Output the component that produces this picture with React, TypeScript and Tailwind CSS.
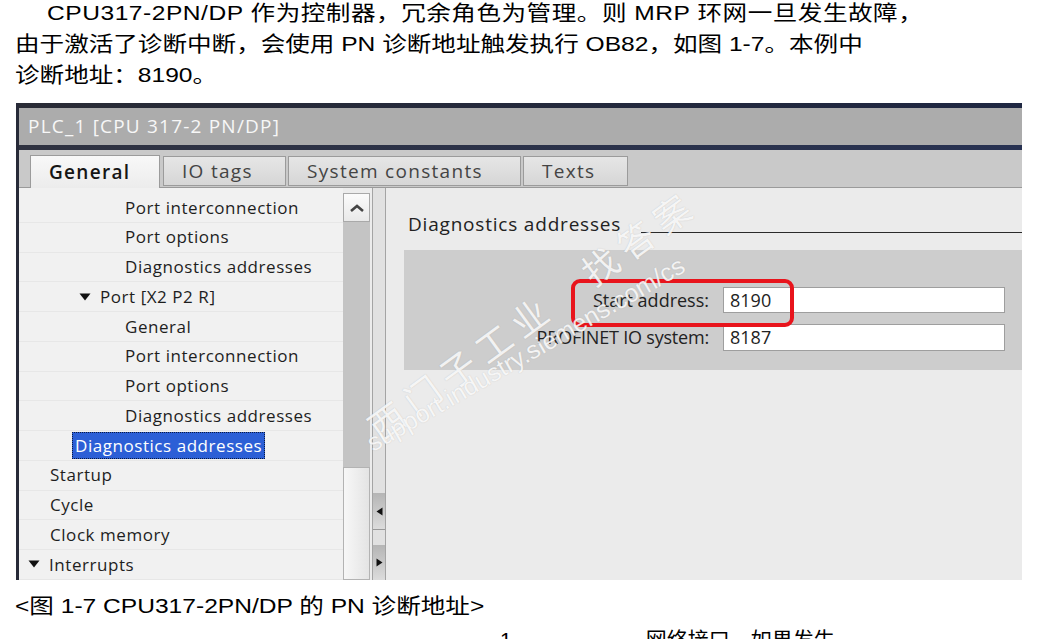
import React from "react";

type Row = { label: string; level: number; selected?: boolean; arrow?: boolean };

const rows: Row[] = [
  { label: "Port interconnection", level: 4 },
  { label: "Port options", level: 4 },
  { label: "Diagnostics addresses", level: 4 },
  { label: "Port [X2 P2 R]", level: 3, arrow: true },
  { label: "General", level: 4 },
  { label: "Port interconnection", level: 4 },
  { label: "Port options", level: 4 },
  { label: "Diagnostics addresses", level: 4 },
  { label: "Diagnostics addresses", level: 2, selected: true },
  { label: "Startup", level: 1 },
  { label: "Cycle", level: 1 },
  { label: "Clock memory", level: 1 },
  { label: "Interrupts", level: 0, arrow: true },
];

function Tri() {
  return (
    <svg width="12" height="8" viewBox="0 0 12 8" className="shrink-0">
      <path d="M0.5 0.5 L11.5 0.5 L6 7.5 Z" fill="#111" />
    </svg>
  );
}

function TreeRow({ r }: { r: Row }) {
  const pad =
    r.level === 4
      ? "pl-[106px]"
      : r.level === 3
      ? "pl-[60px]"
      : r.level === 2
      ? "pl-[53px]"
      : r.level === 1
      ? "pl-[31px]"
      : "pl-[9px]";
  return (
    <div className={`h-[29.75px] flex items-center border-b border-[#e7e7e7] ${pad}`}>
      {r.arrow && (
        <span className="mr-[9px] flex items-center">
          <Tri />
        </span>
      )}
      {r.selected ? (
        <span className="h-[27px] flex items-center px-[3px] bg-[#2c5fd6] text-white outline-1 outline-dotted outline-[#0b1a40] -outline-offset-1">
          {r.label}
        </span>
      ) : (
        <span className="text-[#1e1e1e]">{r.label}</span>
      )}
    </div>
  );
}

export default function App() {
  const doc = "font-['Liberation_Sans','Noto_Sans_CJK_SC',sans-serif]";
  const ui = "font-['Open_Sans','Noto_Sans',sans-serif]";
  const line = "inline-block origin-left scale-x-[1.17] whitespace-nowrap";
  return (
    <div className={`relative w-[1052px] h-[639px] overflow-hidden bg-white text-black ${doc}`}>
      {/* paragraph */}
      <div className="-mt-[3px] pl-[15px] text-[21px] leading-[31px]">
        <div className="h-[31px] pl-[32px]">
          <span className={`${line} tracking-[0.45px]`}>
            CPU317-2PN/DP 作为控制器，冗余角色为管理。则 MRP 环网一旦发生故障，
          </span>
        </div>
        <div className="h-[31px]">
          <span className={line}>
            由于激活了诊断中断，会使用 PN 诊断地址触发执行 OB82，如图 1-7。本例中
          </span>
        </div>
        <div className="h-[31px]">
          <span className={line}>诊断地址：8190。</span>
        </div>
      </div>

      {/* screenshot */}
      <div className={`relative mt-[13px] ml-[16px] w-[1006px] h-[477px] flex flex-col border-l-[3px] border-[#272a38] ${ui}`}>
        <div className="h-[5px] bg-gradient-to-r from-[#2a2c36] to-[#1f2742]" />
        <div className="h-[37px] bg-[#acacac] flex items-center pl-[9px] text-[19px] tracking-[1.2px] text-[#f7f7f7] whitespace-nowrap">
          PLC_1 [CPU 317-2 PN/DP]
        </div>
        <div className="h-[5px] bg-gradient-to-r from-[#2f3240] to-[#283252]" />
        {/* tabs */}
        <div className="h-[38px] bg-[#c9c9c9] border-b border-[#9a9a9a] flex items-end pl-[11px] text-[19px] tracking-[1.3px]">
          <div className="w-[130px] h-[33px] -mb-px flex items-center pl-[18px] bg-gradient-to-b from-[#f8f8f8] to-[#ececec] border border-b-0 border-[#9b9b9b] font-semibold text-[#151515]">
            General
          </div>
          <div className="ml-[3px] w-[123px] h-[30px] mb-px flex items-center pl-[18px] bg-gradient-to-b from-[#e6e6e6] to-[#d6d6d6] border border-[#9b9b9b] text-[#444]">
            IO tags
          </div>
          <div className="ml-[2px] w-[233px] h-[30px] mb-px flex items-center pl-[18px] bg-gradient-to-b from-[#e6e6e6] to-[#d6d6d6] border border-[#9b9b9b] text-[#444] whitespace-nowrap">
            System constants
          </div>
          <div className="ml-[2px] w-[105px] h-[30px] mb-px flex items-center pl-[18px] bg-gradient-to-b from-[#e6e6e6] to-[#d6d6d6] border border-[#9b9b9b] text-[#444]">
            Texts
          </div>
        </div>

        {/* content */}
        <div className="flex-1 flex min-h-0">
          {/* tree */}
          <div className="w-[324px] bg-[#f1f1f1] pt-[5px] text-[17px] tracking-[0.55px] whitespace-nowrap overflow-hidden">
            {rows.map((r, i) => (
              <TreeRow key={i} r={r} />
            ))}
          </div>
          {/* scrollbar */}
          <div className="w-[29px] flex flex-col pt-[5px] pr-[2px] bg-[#ececec]">
            <div className="h-[29px] flex items-center justify-center bg-gradient-to-b from-[#fbfbfb] to-[#e9e9e9] border border-[#a9a9a9]">
              <svg width="16" height="10" viewBox="0 0 16 10">
                <polyline points="2,8 8,3 14,8" fill="none" stroke="#454545" strokeWidth="2.6" />
              </svg>
            </div>
            <div className="h-[245px] bg-[#c4c4c4]" />
            <div className="flex-1 bg-gradient-to-r from-[#f7f7f7] to-[#e4e4e4] border border-[#b3b3b3]" />
          </div>
          {/* splitter */}
          <div className="w-[14px] flex flex-col bg-[#e1e1e1] border-l border-r border-[#a4a4a4]">
            <div className="mt-[305px] h-[37px] bg-gradient-to-b from-[#b5b5b5] to-[#dcdcdc] flex items-center justify-center border-b border-[#999]">
              <svg width="7" height="9" viewBox="0 0 7 9">
                <path d="M6.5 0.5 L0.5 4.5 L6.5 8.5 Z" fill="#111" />
              </svg>
            </div>
            <div className="mt-[15px] flex-1 bg-gradient-to-b from-[#b5b5b5] to-[#dcdcdc] flex items-center justify-center">
              <svg width="7" height="9" viewBox="0 0 7 9">
                <path d="M0.5 0.5 L6.5 4.5 L0.5 8.5 Z" fill="#111" />
              </svg>
            </div>
          </div>
          {/* right panel */}
          <div className="flex-1 bg-[#ebebeb] flex flex-col">
            <div className="pt-[23px] pl-[22px] flex items-end">
              <div className="h-[26px] flex items-center text-[19px] tracking-[0.8px] text-[#222] whitespace-nowrap">
                Diagnostics addresses
              </div>
              <div className="ml-[20px] mb-[4px] flex-1 h-px bg-[#2a2a2a]" />
            </div>
            <div className="relative mt-[13px] ml-[18px] h-[120px] bg-[#cdcdcd] pt-[37px] pr-[17px] grid grid-cols-[1fr_282px] gap-x-[14px] gap-y-[11px] content-start text-[18px] text-[#222]">
              <div className="h-[26px] flex items-center justify-end whitespace-nowrap">Start address:</div>
              <div className="h-[26px] flex items-center pl-[6px] bg-white border border-[#9e9e9e]">8190</div>
              <div className="h-[27px] flex items-center justify-end whitespace-nowrap tracking-[-0.2px]">PROFINET IO system:</div>
              <div className="h-[27px] flex items-center pl-[6px] bg-white border border-[#9e9e9e]">8187</div>
              <div className="absolute left-[167px] top-[29px] w-[223px] h-[48px] border-[4px] border-[#e8141c] rounded-[9px]" />
            </div>
          </div>
        </div>

        {/* watermark overlay */}
        <div className="pointer-events-none absolute left-[352px] top-[300px] origin-left -rotate-[36deg] whitespace-nowrap text-[36px] tracking-[8px] text-white/85 [text-shadow:0_0_1px_rgba(90,90,90,0.35)] font-['Noto_Sans_CJK_SC',sans-serif]">
          西门子工业　找答案
        </div>
        <div className="pointer-events-none absolute left-[350px] top-[323px] origin-left -rotate-[30deg] whitespace-nowrap text-[25px] text-white/85 [text-shadow:0_0_1px_rgba(90,90,90,0.3)] font-['Liberation_Sans',sans-serif]">
          support.industry.siemens.com/cs
        </div>
      </div>

      {/* caption */}
      <div className="mt-[10px] pl-[15px] text-[21px] leading-[31px] h-[31px]">
        <span className={line}>&lt;图 1-7 CPU317-2PN/DP 的 PN 诊断地址&gt;</span>
      </div>
      <div className="mt-[3px] pl-[500px] text-[21px] leading-[31px] whitespace-nowrap flex">
        <span>1</span>
        <span className="ml-[134px]">网络接口，如果发生</span>
      </div>
    </div>
  );
}
